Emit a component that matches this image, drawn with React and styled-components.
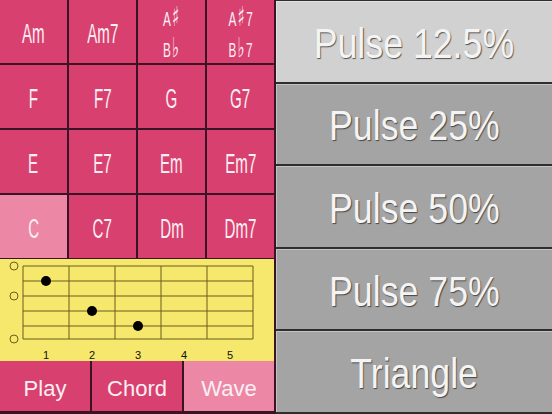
import React from 'react';
import styled, { createGlobalStyle } from 'styled-components';

const colors = {
  pink: '#d8416f',
  pinkLight: '#ec88a6',
  line: '#3a1424',
  yellow: '#f5e86c',
  fret: '#6b5c1c',
  gray: '#a4a4a4',
  grayLight: '#d1d1d1',
  dark: '#2e2e2e',
};

const GlobalStyle = createGlobalStyle`
  html, body {
    margin: 0;
    padding: 0;
    background: ${colors.dark};
    font-family: "Liberation Sans", Arial, sans-serif;
  }
`;

const Screen = styled.div`
  display: flex;
  width: 552px;
  height: 414px;
  overflow: hidden;
  background: ${colors.line};
`;

const LeftPanel = styled.div`
  display: flex;
  flex-direction: column;
  width: 274px;
  border-right: 2px solid ${colors.line};
`;

const ChordGrid = styled.div`
  display: grid;
  grid-template-columns: repeat(4, 1fr);
  grid-template-rows: repeat(4, 63px);
  gap: 2px;
  padding-bottom: 1px;
  background: ${colors.line};
`;

const ChordCell = styled.div`
  display: flex;
  flex-direction: column;
  align-items: center;
  justify-content: center;
  padding-top: 5px;
  box-sizing: border-box;
  background: ${(p) => (p.$active ? colors.pinkLight : colors.pink)};
  color: #fbeff4;
  font-size: ${(p) => (p.$double ? '21px' : '27px')};
  line-height: ${(p) => (p.$double ? '31px' : '1')};
  cursor: pointer;
`;

const Narrow = styled.span`
  display: inline-block;
  transform: scaleX(0.56);
  white-space: nowrap;
  font-family: "Liberation Sans", "DejaVu Sans", sans-serif;
`;

const Sym = styled.span`
  font-family: "DejaVu Sans", sans-serif;
  font-size: 1.3em;
  line-height: 0;
  margin: 0 0.08em;
`;

const Fretboard = styled.div`
  height: 102px;
  background: ${colors.yellow};
`;

const Tabs = styled.div`
  display: grid;
  grid-template-columns: repeat(3, 1fr);
  gap: 2px;
  height: 50px;
  border-bottom: 2px solid ${colors.line};
  background: ${colors.line};
`;

const Tab = styled.div`
  display: flex;
  align-items: center;
  justify-content: center;
  padding-top: 6px;
  box-sizing: border-box;
  background: ${(p) => (p.$active ? colors.pinkLight : colors.pink)};
  color: #fbeff4;
  font-size: 22px;
  cursor: pointer;
`;

const WaveList = styled.div`
  flex: 1;
  display: flex;
  flex-direction: column;
  gap: 2px;
  padding: 1px 0 2px;
  background: ${colors.dark};
`;

const WaveButton = styled.div`
  flex: 1;
  display: flex;
  align-items: center;
  justify-content: center;
  padding-top: 5px;
  box-sizing: border-box;
  background: ${(p) => (p.$active ? colors.grayLight : colors.gray)};
  box-shadow: inset 1px 1px 0 rgba(255, 255, 255, 0.35);
  color: #f4f4f4;
  font-size: 42px;
  text-shadow: 1px 1px 1px rgba(40, 40, 40, 0.75);
  cursor: pointer;
`;

const Wide = styled.span`
  display: inline-block;
  transform: scaleX(0.85);
  white-space: nowrap;
`;

const chords = [
  ['Am'], ['Am7'], ['A#', 'Bb'], ['A#7', 'Bb7'],
  ['F'], ['F7'], ['G'], ['G7'],
  ['E'], ['E7'], ['Em'], ['Em7'],
  ['C'], ['C7'], ['Dm'], ['Dm7'],
];

const waves = ['Pulse 12.5%', 'Pulse 25%', 'Pulse 50%', 'Pulse 75%', 'Triangle'];

const strings = [7, 22, 37, 52, 67, 80];
const frets = [23, 69, 115, 161, 207, 253];

// turn "A#7" into A + sharp glyph + 7
function ChordName({ name }) {
  const root = name[0];
  const acc = name[1] === '#' ? '♯' : name[1] === 'b' ? '♭' : null;
  const rest = acc ? name.slice(2) : name.slice(1);
  return (
    <Narrow>
      {root}
      {acc && <Sym>{acc}</Sym>}
      {rest}
    </Narrow>
  );
}

function Diagram() {
  return (
    <svg width="274" height="102" viewBox="0 0 274 102">
      {strings.map((y) => (
        <line key={'s' + y} x1="23" x2="253" y1={y} y2={y} stroke={colors.fret} strokeWidth="1" />
      ))}
      {frets.map((x) => (
        <line key={'f' + x} x1={x} x2={x} y1="7" y2="80" stroke={colors.fret} strokeWidth="1" />
      ))}
      {[7, 37, 80].map((y) => (
        <circle key={'o' + y} cx="14" cy={y} r="4" fill="none" stroke={colors.fret} strokeWidth="1" />
      ))}
      <circle cx="46" cy="22" r="5" fill="#000" />
      <circle cx="92" cy="52" r="5" fill="#000" />
      <circle cx="138" cy="67" r="5" fill="#000" />
      {[1, 2, 3, 4, 5].map((n, i) => (
        <text
          key={n}
          x={46 + i * 46}
          y="100"
          textAnchor="middle"
          fontSize="11"
          fontFamily="Liberation Sans, Arial, sans-serif"
          fill="#111"
        >
          {n}
        </text>
      ))}
    </svg>
  );
}

export default function App() {
  return (
    <Screen>
      <GlobalStyle />
      <LeftPanel>
        <ChordGrid>
          {chords.map((lines, i) => (
            <ChordCell key={i} $double={lines.length > 1} $active={lines[0] === 'C'}>
              {lines.map((l) => (
                <ChordName key={l} name={l} />
              ))}
            </ChordCell>
          ))}
        </ChordGrid>
        <Fretboard>
          <Diagram />
        </Fretboard>
        <Tabs>
          <Tab>Play</Tab>
          <Tab>Chord</Tab>
          <Tab $active>Wave</Tab>
        </Tabs>
      </LeftPanel>
      <WaveList>
        {waves.map((w, i) => (
          <WaveButton key={w} $active={i === 0}>
            <Wide>{w}</Wide>
          </WaveButton>
        ))}
      </WaveList>
    </Screen>
  );
}
